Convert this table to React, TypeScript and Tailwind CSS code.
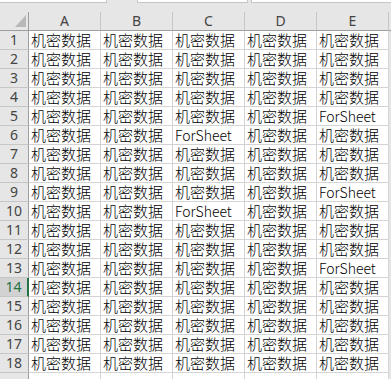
import React from "react";

const COLS = ["A", "B", "C", "D", "E"];
const FOR: Record<number, string> = { 5: "E", 6: "C", 9: "E", 10: "C", 13: "E" };
const ROWS = Array.from({ length: 18 }, (_, i) => i + 1);

export default function App() {
  return (
    <div
      className="w-[391px] h-[379px] overflow-hidden bg-[#e6e6e6] flex flex-col"
      style={{ fontFamily: '"Noto Sans CJK SC", "Noto Sans", sans-serif' }}
    >
      {/* formula bar bottom edge */}
      <div className="h-[12px] flex items-start shrink-0">
        <div className="w-[107px] h-[3px] bg-white border-b border-r border-[#c6c6c6]" />
        <div className="w-[30px]" />
        <div className="w-[111px] h-[3px] bg-white border-b border-l border-r border-[#c6c6c6]" />
        <div className="w-[3px]" />
        <div className="flex-1 h-[3px] bg-white border-b border-l border-[#c6c6c6]" />
      </div>
      {/* header row */}
      <div className="grid grid-cols-[29px_repeat(5,72px)_1fr] h-[19px] shrink-0">
        <div className="relative border-r border-b border-[#9e9e9e] bg-[#e6e6e6]">
          <svg className="absolute left-[15px] top-[3px]" width="12" height="12" viewBox="0 0 12 12">
            <polygon points="11,0 11,12 0,12" fill="#b8b8b8" />
          </svg>
        </div>
        {COLS.map((c) => (
          <div
            key={c}
            className="border-r border-[#c6c6c6] border-b border-b-[#9e9e9e] bg-[#e6e6e6] flex items-center justify-center text-[14px] leading-[18px] text-[#444444]"
            style={{ fontFamily: '"Noto Sans", sans-serif' }}
          >
            {c}
          </div>
        ))}
        <div className="border-b border-[#9e9e9e]" />
      </div>
      {/* body */}
      <div className="flex-1 grid grid-cols-[29px_repeat(5,72px)_1fr] auto-rows-[19px] content-start">
        {ROWS.map((r) => (
          <React.Fragment key={r}>
            {r === 14 ? (
              <div
                className="bg-[#d2d2d2] border-b border-[#c6c6c6] border-r-2 border-r-[#217346] flex items-center justify-center text-[14px] leading-[18px] text-[#217346]"
                style={{ fontFamily: '"Noto Sans", sans-serif' }}
              >
                {r}
              </div>
            ) : (
              <div
                className="bg-[#e6e6e6] border-b border-[#c6c6c6] border-r border-r-[#9e9e9e] flex items-center justify-center text-[14px] leading-[18px] text-[#444444]"
                style={{ fontFamily: '"Noto Sans", sans-serif' }}
              >
                {r}
              </div>
            )}
            {COLS.map((c) => (
              <div
                key={c}
                className="bg-white border-r border-b border-[#d4d4d4] pl-[2px] flex items-center text-black whitespace-nowrap"
              >
                {FOR[r] === c ? (
                  <span className="text-[14px] leading-[18px] font-light">ForSheet</span>
                ) : (
                  <span className="text-[15px] leading-[18px] font-light">机密数据</span>
                )}
              </div>
            ))}
            <div className="bg-[#e6e6e6]" />
          </React.Fragment>
        ))}
        <div className="bg-[#e6e6e6] border-r border-[#9e9e9e] h-[19px]" />
        {COLS.map((c) => (
          <div key={c} className="bg-white border-r border-[#d4d4d4] h-[19px]" />
        ))}
        <div className="bg-[#e6e6e6]" />
      </div>
    </div>
  );
}
